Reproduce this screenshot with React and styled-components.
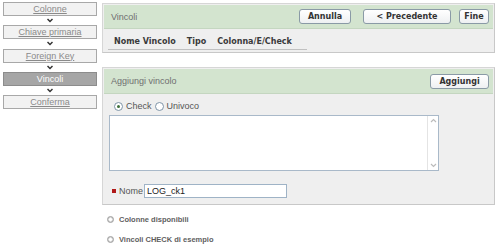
import React from "react";
import styled, { createGlobalStyle } from "styled-components";

const GlobalStyle = createGlobalStyle`
  body {
    margin: 0;
    background: #ffffff;
    font-family: "DejaVu Sans", Verdana, sans-serif;
  }
`;

const Page = styled.div`
  display: flex;
  width: 500px;
  height: 248px;
  overflow: hidden;
`;

// LEFT WIZARD NAV
const Nav = styled.div`
  width: 94px;
  padding: 2px 3px 0 3px;
  display: flex;
  flex-direction: column;
`;

const Step = styled.div`
  box-sizing: border-box;
  height: 14px;
  border: 1px solid ${(p) => (p.active ? "#8c8c8c" : "#a8a8a8")};
  background: ${(p) => (p.active ? "#a6a6a6" : "#f2f2f2")};
  color: ${(p) => (p.active ? "#ffffff" : "#8a8a8a")};
  font-family: "Liberation Sans", Arial, sans-serif;
  font-size: 9px;
  line-height: 12px;
  text-align: center;
  text-decoration: ${(p) => (p.active ? "none" : "underline")};
`;

const Arrow = styled.div`
  height: 9.25px;
  display: flex;
  align-items: center;
  justify-content: center;
`;

// MAIN COLUMN
const Main = styled.div`
  width: 393px;
  margin-left: 2px;
  padding-top: 3px;
  display: flex;
  flex-direction: column;
`;

const Panel = styled.div`
  box-sizing: border-box;
  height: ${(p) => p.h}px;
  margin-bottom: ${(p) => p.mb || 0}px;
  border: 1px solid #d6d6d6;
  border-right-color: #c8c8c8;
  border-bottom-color: #c8c8c8;
  background: #efefef;
  display: flex;
  flex-direction: column;
`;

const Header = styled.div`
  height: ${(p) => p.h}px;
  margin: 1px 1px 0 1px;
  background: #d3e4cf;
  border-bottom: 1px solid #c4d6c0;
  display: flex;
  align-items: center;
  padding: 0 4px 0 7px;
`;

const Title = styled.div`
  flex: 1;
  font-family: "Liberation Sans", Arial, sans-serif;
  font-size: 9px;
  color: #6f6f6f;
`;

const Button = styled.div`
  box-sizing: border-box;
  height: 15px;
  width: ${(p) => p.w}px;
  margin-left: ${(p) => p.ml || 0}px;
  border: 1px solid #8a9aa6;
  border-radius: 3px;
  background: linear-gradient(#ffffff, #eef0f2);
  font-family: "DejaVu Sans", Verdana, sans-serif;
  font-weight: bold;
  font-size: 8px;
  line-height: 13px;
  text-align: center;
  color: #333;
`;

const Columns = styled.div`
  display: flex;
  gap: 11px;
  margin: 8px 0 0 5px;
  width: 193px;
  padding: 0 0 3px 6px;
  border-bottom: 1px solid #c0c0c0;
  font-size: 8px;
  font-weight: bold;
  color: #3a3a3a;
`;

const RadioRow = styled.div`
  display: flex;
  align-items: center;
  margin: 7px 0 0 11px;
  font-family: "Liberation Sans", Arial, sans-serif;
  font-size: 9px;
  color: #555;
`;

const Radio = styled.span`
  box-sizing: border-box;
  width: 9px;
  height: 9px;
  border-radius: 50%;
  border: 1px solid #7e94a8;
  background: #fff;
  display: inline-flex;
  align-items: center;
  justify-content: center;
  margin: 0 3px 0 ${(p) => p.ml || 0}px;

  &::after {
    content: "";
    width: 3px;
    height: 3px;
    border-radius: 50%;
    background: ${(p) => (p.checked ? "#3d6f3a" : "transparent")};
  }
`;

const TextBox = styled.div`
  box-sizing: border-box;
  height: 56px;
  width: 330px;
  margin: 4px 0 0 6px;
  border: 1px solid #a9b9c9;
  background: #fff;
  display: flex;
  justify-content: flex-end;
`;

const Scroll = styled.div`
  width: 10px;
  border-left: 1px solid #e4e4e4;
  display: flex;
  flex-direction: column;
  justify-content: space-between;
  align-items: center;
  padding: 2px 0;
`;

const NameRow = styled.div`
  display: flex;
  align-items: center;
  margin: 13px 0 0 9px;
  font-family: "Liberation Sans", Arial, sans-serif;
  font-size: 9px;
  color: #555;
`;

const Required = styled.span`
  width: 4px;
  height: 4px;
  background: #b01818;
  margin-right: 3px;
`;

const NameInput = styled.div`
  box-sizing: border-box;
  width: 143px;
  height: 14px;
  margin-left: 1px;
  border: 1px solid #9fb3c6;
  background: #fff;
  padding-left: 2px;
  font-size: 9px;
  line-height: 12px;
  color: #222;
`;

const Links = styled.div`
  display: flex;
  flex-direction: column;
  gap: 8px;
  margin: 8px 0 0 5px;
`;

const LinkItem = styled.div`
  display: flex;
  align-items: center;
  height: 12px;
  font-family: "Liberation Sans", Arial, sans-serif;
  font-weight: bold;
  font-size: 7.5px;
  color: #5e5e5e;
`;

const Bullet = styled.span`
  box-sizing: border-box;
  width: 7px;
  height: 7px;
  border-radius: 50%;
  border: 1px solid #a0a0a0;
  background: radial-gradient(circle, #ffffff 30%, #c8c8c8 70%);
  margin-right: 5px;
`;

const Chevron = () => (
  <svg width="6" height="5" viewBox="0 0 6 5">
    <path d="M0.5 1 L3 3.6 L5.5 1" stroke="#333" strokeWidth="1.4" fill="none" />
  </svg>
);

const ScrollArrow = ({ up }) => (
  <svg width="7" height="5" viewBox="0 0 7 5">
    <path
      d={up ? "M1 4 L3.5 1.5 L6 4" : "M1 1 L3.5 3.5 L6 1"}
      stroke="#bcbcbc"
      strokeWidth="1.2"
      fill="none"
    />
  </svg>
);

const steps = ["Colonne", "Chiave primaria", "Foreign Key", "Vincoli", "Conferma"];

export default function App() {
  return (
    <Page>
      <GlobalStyle />
      <Nav>
        {steps.map((s, i) => (
          <React.Fragment key={s}>
            <Step active={s === "Vincoli"}>{s}</Step>
            {i < steps.length - 1 && (
              <Arrow>
                <Chevron />
              </Arrow>
            )}
          </React.Fragment>
        ))}
      </Nav>

      <Main>
        <Panel h={50} mb={14}>
          <Header h={23}>
            <Title>Vincoli</Title>
            <Button w={52}>Annulla</Button>
            <Button w={88} ml={12}>&lt; Precedente</Button>
            <Button w={30} ml={8}>Fine</Button>
          </Header>
          <Columns>
            <span>Nome Vincolo</span>
            <span>Tipo</span>
            <span>Colonna/E/Check</span>
          </Columns>
        </Panel>

        <Panel h={138}>
          <Header h={24}>
            <Title>Aggiungi vincolo</Title>
            <Button w={59}>Aggiungi</Button>
          </Header>
          <RadioRow>
            <Radio checked />
            Check
            <Radio ml={3} />
            Univoco
          </RadioRow>
          <TextBox>
            <Scroll>
              <ScrollArrow up />
              <ScrollArrow />
            </Scroll>
          </TextBox>
          <NameRow>
            <Required />
            Nome
            <NameInput>LOG_ck1</NameInput>
          </NameRow>
        </Panel>

        <Links>
          <LinkItem>
            <Bullet />
            Colonne disponibili
          </LinkItem>
          <LinkItem>
            <Bullet />
            Vincoli CHECK di esempio
          </LinkItem>
        </Links>
      </Main>
    </Page>
  );
}
